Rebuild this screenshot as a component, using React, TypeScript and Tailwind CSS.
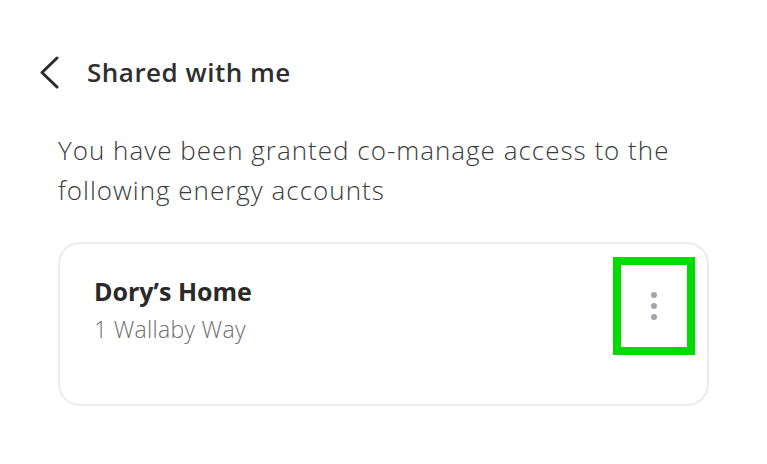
export default function App() {
  return (
    <div className="h-[464px] w-[767px] overflow-hidden bg-white font-['Open_Sans','Liberation_Sans',sans-serif] text-[#2f2f2f]">
      <div className="box-content flex h-[41px] items-center pl-[40px] pt-[52px]">
        <svg
          width="20"
          height="33"
          viewBox="0 0 20 33"
          fill="none"
          stroke="#2b2b2b"
          strokeWidth="3"
          strokeLinecap="round"
          strokeLinejoin="round"
        >
          <path d="M17 2 L2 16.5 L17 31" />
        </svg>
        <h1 className="ml-[27px] text-[26px] font-semibold tracking-[0.5px] text-[#2f2f2f]">
          Shared with me
        </h1>
      </div>

      <p className="mt-[37px] w-[700px] pl-[58px] text-[26px] font-light leading-[40px] tracking-[1px] text-[#3a3a3a]">
        You have been granted co-manage access to the following energy accounts
      </p>

      <div className="mx-[58px] mt-[32px] flex h-[164px] items-start justify-between rounded-[22px] border-2 border-[#ebebeb] pl-[34px] pr-[12px] pt-[13px]">
        <div className="pt-[18px]">
          <div className="text-[25px] font-bold leading-[32px] text-[#2a2a2a]">Dory’s Home</div>
          <div className="mt-[6px] text-[23px] font-light leading-[32px] tracking-[0.3px] text-[#6f6f6f]">1 Wallaby Way</div>
        </div>
        <button className="flex h-[98px] w-[82px] items-center justify-center border-[8px] border-[#00dc00]">
          <span className="flex flex-col gap-[5px]">
            <span className="h-[6px] w-[6px] rounded-full bg-[#a3a3ad]" />
            <span className="h-[6px] w-[6px] rounded-full bg-[#a3a3ad]" />
            <span className="h-[6px] w-[6px] rounded-full bg-[#a3a3ad]" />
          </span>
        </button>
      </div>
    </div>
  );
}
